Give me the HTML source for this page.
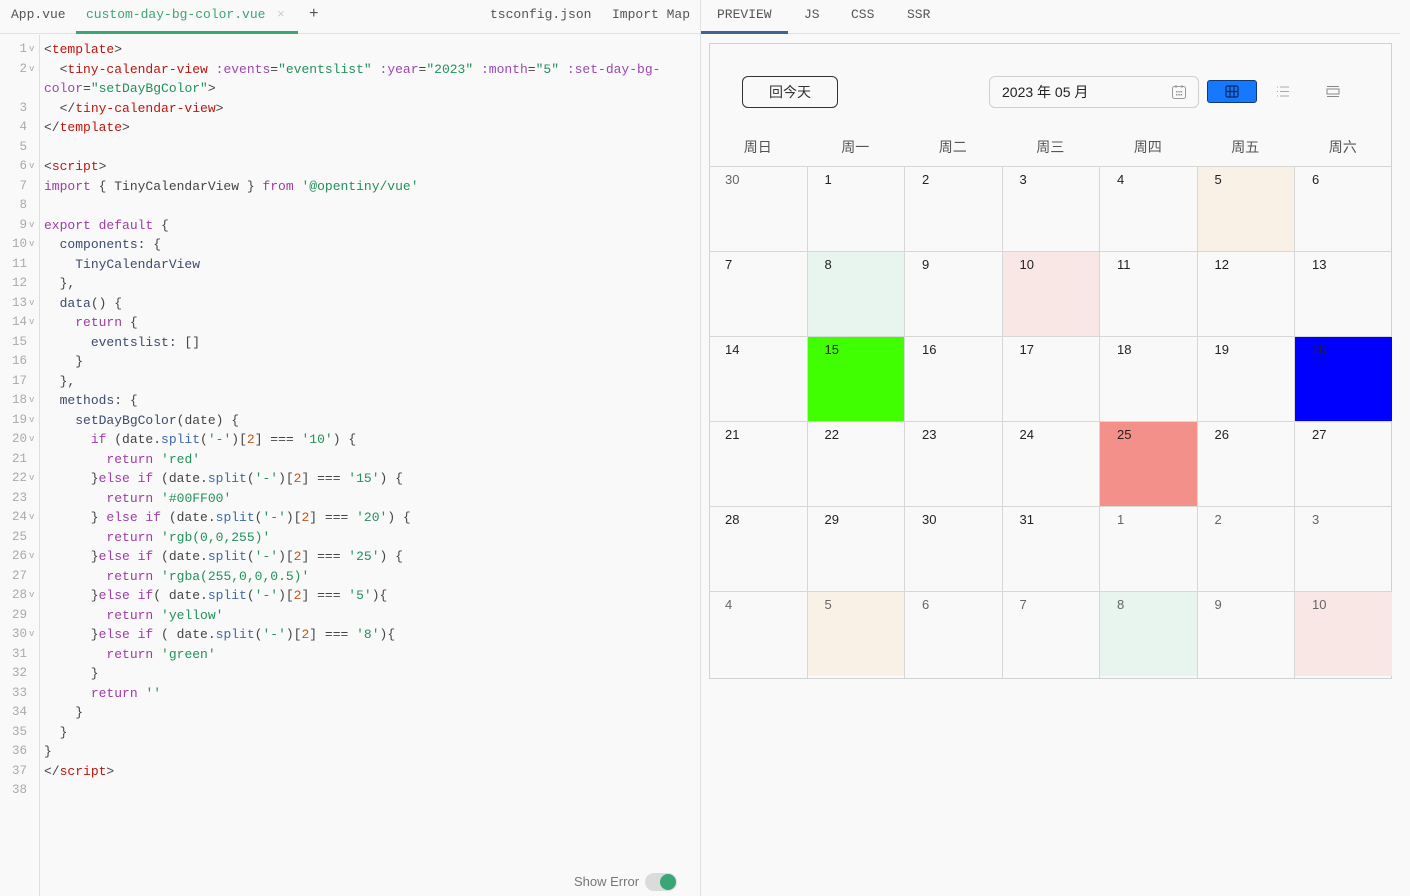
<!DOCTYPE html>
<html><head><meta charset="utf-8"><style>
*{margin:0;padding:0;box-sizing:border-box}
body{width:1410px;height:896px;background:#f8f9f8;font-family:"Liberation Sans","Noto Sans CJK SC",sans-serif;position:relative;overflow:hidden;color:#333}
.mono{font-family:"Liberation Mono","DejaVu Sans Mono",monospace}
.tabs{position:absolute;top:0;left:0;width:700px;height:34px;border-bottom:1px solid #dfe2e0;font-size:13px;color:#555}
.tabs span{position:absolute;top:7px}
.code{position:absolute;top:40px;left:0;width:700px;font-size:13px;line-height:19.5px}
.row{height:19.5px;white-space:pre;position:relative}
.ln{position:absolute;left:0;width:27px;text-align:right;color:#aaa;font-size:12.5px}
.fd{position:absolute;left:29px;color:#aaa;font-size:9px}
.tx{position:absolute;left:44px;color:#444}
.gut{position:absolute;left:39px;top:35px;width:1px;height:861px;background:#dde0de}
.t{color:#c0150f}.k{color:#a03ca6}.s{color:#22915c}.a{color:#9a49b0}.p{color:#3d4b6e}.n{color:#c5560f}.f{color:#3f68a8}
.split{position:absolute;left:700px;top:0;width:1px;height:896px;background:#dfe2e0}
.rt{position:absolute;left:701px;top:0;width:699px;height:34px;border-bottom:1px solid #dfe2e0;font-size:13px;color:#555}
.rt span{position:absolute;top:7px}
.cal{position:absolute;left:709px;top:43px;width:683px;height:636px;border:1px solid #cfd2d0;background:#f8f9f8}
.btn{position:absolute;left:742px;top:76px;width:96px;height:32px;border:1px solid #333;border-radius:6px;font-size:14px;text-align:center;line-height:30px}
.inp{position:absolute;left:989px;top:76px;width:210px;height:32px;border:1px solid #d0d0d0;border-radius:6px;font-size:14px;line-height:30px;padding-left:12px;color:#222}
.wk{position:absolute;top:137px;font-size:14px;color:#555;width:97.5px;text-align:center}
.cell{position:absolute;width:97.5px;height:85px;border-top:1px solid #d6d8d7;font-size:13px;padding:5px 0 0 18px;color:#222}
.cell.o{color:#666}
.vl{position:absolute;top:166px;width:1px;height:512px;background:#d6d8d7}
</style></head><body>
<div class="tabs mono">
<span style="left:11px">App.vue</span>
<span style="left:86px;color:#3aa675">custom-day-bg-color.vue</span>
<span style="left:277px;color:#ccc">×</span>
<span style="left:309px;font-size:16px;top:5px">+</span>
<span style="left:490px">tsconfig.json</span>
<span style="left:612px">Import Map</span>
<div style="position:absolute;left:76px;top:31px;width:222px;height:3px;background:#3aa675"></div>
</div>
<div class="gut"></div>
<div class="code mono">
<div class="row"><span class="ln">1</span><span class="fd">v</span><span class="tx">&lt;<span class="t">template</span>&gt;</span></div>
<div class="row"><span class="ln">2</span><span class="fd">v</span><span class="tx">  &lt;<span class="t">tiny-calendar-view</span> <span class="a">:events</span>=<span class="s">"eventslist"</span> <span class="a">:year</span>=<span class="s">"2023"</span> <span class="a">:month</span>=<span class="s">"5"</span> <span class="a">:set-day-bg-</span></span></div>
<div class="row"><span class="tx"><span class="a">color</span>=<span class="s">"setDayBgColor"</span>&gt;</span></div>
<div class="row"><span class="ln">3</span><span class="tx">  &lt;/<span class="t">tiny-calendar-view</span>&gt;</span></div>
<div class="row"><span class="ln">4</span><span class="tx">&lt;/<span class="t">template</span>&gt;</span></div>
<div class="row"><span class="ln">5</span></div>
<div class="row"><span class="ln">6</span><span class="fd">v</span><span class="tx">&lt;<span class="t">script</span>&gt;</span></div>
<div class="row"><span class="ln">7</span><span class="tx"><span class="k">import</span> { TinyCalendarView } <span class="k">from</span> <span class="s">'@opentiny/vue'</span></span></div>
<div class="row"><span class="ln">8</span></div>
<div class="row"><span class="ln">9</span><span class="fd">v</span><span class="tx"><span class="k">export default</span> {</span></div>
<div class="row"><span class="ln">10</span><span class="fd">v</span><span class="tx">  <span class="p">components</span>: {</span></div>
<div class="row"><span class="ln">11</span><span class="tx">    <span class="p">TinyCalendarView</span></span></div>
<div class="row"><span class="ln">12</span><span class="tx">  },</span></div>
<div class="row"><span class="ln">13</span><span class="fd">v</span><span class="tx">  <span class="p">data</span>() {</span></div>
<div class="row"><span class="ln">14</span><span class="fd">v</span><span class="tx">    <span class="k">return</span> {</span></div>
<div class="row"><span class="ln">15</span><span class="tx">      <span class="p">eventslist</span>: []</span></div>
<div class="row"><span class="ln">16</span><span class="tx">    }</span></div>
<div class="row"><span class="ln">17</span><span class="tx">  },</span></div>
<div class="row"><span class="ln">18</span><span class="fd">v</span><span class="tx">  <span class="p">methods</span>: {</span></div>
<div class="row"><span class="ln">19</span><span class="fd">v</span><span class="tx">    <span class="p">setDayBgColor</span>(date) {</span></div>
<div class="row"><span class="ln">20</span><span class="fd">v</span><span class="tx">      <span class="k">if</span> (date.<span class="f">split</span>(<span class="s">'-'</span>)[<span class="n">2</span>] === <span class="s">'10'</span>) {</span></div>
<div class="row"><span class="ln">21</span><span class="tx">        <span class="k">return</span> <span class="s">'red'</span></span></div>
<div class="row"><span class="ln">22</span><span class="fd">v</span><span class="tx">      }<span class="k">else if</span> (date.<span class="f">split</span>(<span class="s">'-'</span>)[<span class="n">2</span>] === <span class="s">'15'</span>) {</span></div>
<div class="row"><span class="ln">23</span><span class="tx">        <span class="k">return</span> <span class="s">'#00FF00'</span></span></div>
<div class="row"><span class="ln">24</span><span class="fd">v</span><span class="tx">      } <span class="k">else if</span> (date.<span class="f">split</span>(<span class="s">'-'</span>)[<span class="n">2</span>] === <span class="s">'20'</span>) {</span></div>
<div class="row"><span class="ln">25</span><span class="tx">        <span class="k">return</span> <span class="s">'rgb(0,0,255)'</span></span></div>
<div class="row"><span class="ln">26</span><span class="fd">v</span><span class="tx">      }<span class="k">else if</span> (date.<span class="f">split</span>(<span class="s">'-'</span>)[<span class="n">2</span>] === <span class="s">'25'</span>) {</span></div>
<div class="row"><span class="ln">27</span><span class="tx">        <span class="k">return</span> <span class="s">'rgba(255,0,0,0.5)'</span></span></div>
<div class="row"><span class="ln">28</span><span class="fd">v</span><span class="tx">      }<span class="k">else if</span>( date.<span class="f">split</span>(<span class="s">'-'</span>)[<span class="n">2</span>] === <span class="s">'5'</span>){</span></div>
<div class="row"><span class="ln">29</span><span class="tx">        <span class="k">return</span> <span class="s">'yellow'</span></span></div>
<div class="row"><span class="ln">30</span><span class="fd">v</span><span class="tx">      }<span class="k">else if</span> ( date.<span class="f">split</span>(<span class="s">'-'</span>)[<span class="n">2</span>] === <span class="s">'8'</span>){</span></div>
<div class="row"><span class="ln">31</span><span class="tx">        <span class="k">return</span> <span class="s">'green'</span></span></div>
<div class="row"><span class="ln">32</span><span class="tx">      }</span></div>
<div class="row"><span class="ln">33</span><span class="tx">      <span class="k">return</span> <span class="s">''</span></span></div>
<div class="row"><span class="ln">34</span><span class="tx">    }</span></div>
<div class="row"><span class="ln">35</span><span class="tx">  }</span></div>
<div class="row"><span class="ln">36</span><span class="tx">}</span></div>
<div class="row"><span class="ln">37</span><span class="tx">&lt;/<span class="t">script</span>&gt;</span></div>
<div class="row"><span class="ln">38</span></div>
</div>
<div style="position:absolute;left:574px;top:874px;font-size:13px;color:#777">Show Error</div>
<div style="position:absolute;left:645px;top:873px;width:32px;height:18px;border-radius:9px;background:#d9dcda"></div>
<div style="position:absolute;left:660px;top:874px;width:16px;height:16px;border-radius:8px;background:#3aa675"></div>
<div class="split"></div>
<div class="rt mono">
<span style="left:16px">PREVIEW</span><span style="left:103px">JS</span><span style="left:150px">CSS</span><span style="left:206px">SSR</span>
<div style="position:absolute;left:0;top:31px;width:87px;height:3px;background:#3c6590"></div>
</div>
<div class="cal"></div>
<div class="btn">回今天</div>
<div class="inp">2023 年 05 月</div>
<svg style="position:absolute;left:1171px;top:84px" width="16" height="16" viewBox="0 0 16 16" fill="none" stroke="#999" stroke-width="1"><rect x="1.5" y="2.5" width="13" height="12" rx="2"/><path d="M5 1v3M11 1v3"/><g fill="#999" stroke="none"><rect x="5" y="7" width="1.5" height="1.5"/><rect x="7.3" y="7" width="1.5" height="1.5"/><rect x="9.6" y="7" width="1.5" height="1.5"/><rect x="5" y="10" width="1.5" height="1.5"/><rect x="7.3" y="10" width="1.5" height="1.5"/><rect x="9.6" y="10" width="1.5" height="1.5"/></g></svg>
<div style="position:absolute;left:1207px;top:80px;width:50px;height:23px;background:#1677ff;border:1px solid #0d3a7a;border-radius:3px"></div>
<svg style="position:absolute;left:1225px;top:85px" width="14" height="13" viewBox="0 0 14 13" fill="none" stroke="#0d2a5a" stroke-width="1.2"><rect x="1" y="1" width="12" height="11" rx="1.5"/><path d="M5 1v11M9 1v11M1 6.5h12"/></svg>
<svg style="position:absolute;left:1276px;top:85px" width="14" height="13" viewBox="0 0 14 13" stroke="#aaa" stroke-width="1"><path d="M1 2h1M4 2h9M1 6.5h1M4 6.5h9M1 11h1M4 11h9"/></svg>
<svg style="position:absolute;left:1326px;top:85px" width="14" height="13" viewBox="0 0 14 13" fill="none" stroke="#888" stroke-width="1"><path d="M1 1.5h12"/><rect x="1" y="4" width="12" height="5"/><path d="M1 11.5h12"/></svg>
<div class="wk" style="left:709px">周日</div><div class="wk" style="left:806.5px">周一</div><div class="wk" style="left:904px">周二</div><div class="wk" style="left:1001.5px">周三</div><div class="wk" style="left:1099px">周四</div><div class="wk" style="left:1196.5px">周五</div><div class="wk" style="left:1294px">周六</div>
<div id="grid"></div>
<script>
var d=[[30,1,2,3,4,5,6],[7,8,9,10,11,12,13],[14,15,16,17,18,19,20],[21,22,23,24,25,26,27],[28,29,30,31,1,2,3],[4,5,6,7,8,9,10]];
var bg={'0-5':'#faf1e6','1-1':'#e8f4ee','1-3':'#f8e7e5','2-1':'#40ff00','2-6':'#0000ff','3-4':'#f4908a','5-1':'#faf1e6','5-4':'#e8f4ee','5-6':'#f8e7e5'};
var h='';
for(var r=0;r<6;r++)for(var c=0;c<7;c++){var o=(r==0&&c==0)||(r==4&&c>=4)||r==5;var b=bg[r+'-'+c]||'transparent';
h+='<div class="cell'+(o?' o':'')+'" style="left:'+(709+c*97.5)+'px;top:'+(166+r*85)+'px;background:'+b+(c==0?';padding-left:16px':'')+'">'+d[r][c]+'</div>';}
for(var c=1;c<7;c++)h+='<div class="vl" style="left:'+(709+c*97.5)+'px"></div>';
document.getElementById('grid').innerHTML=h;
</script>
</body></html>
